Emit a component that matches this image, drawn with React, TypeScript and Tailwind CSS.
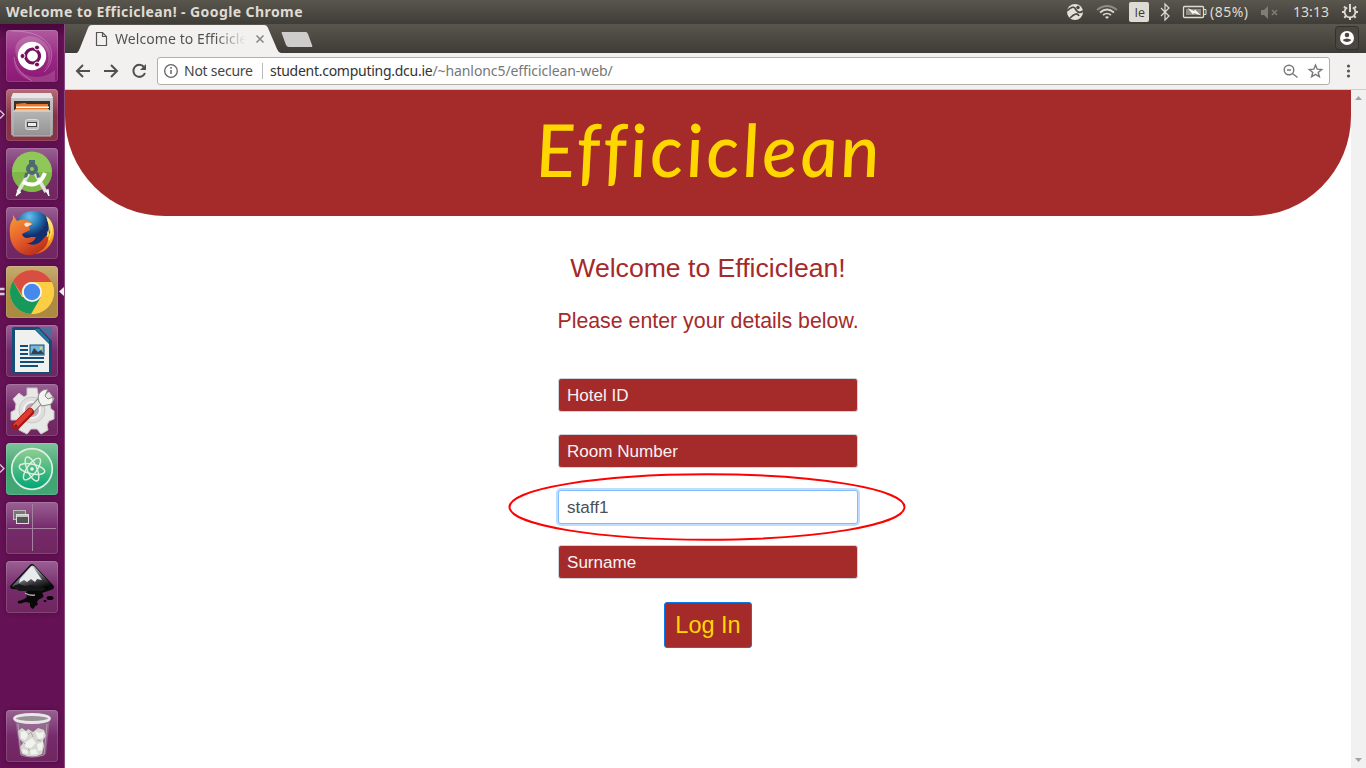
import React from "react";

type Kids = { children: React.ReactNode };

function Tile({ className, children }: Kids & { className: string }) {
  return (
    <div className={`relative h-[52px] w-[52px] shrink-0 rounded-[4px] shadow-[inset_0_0_0_1px_rgba(255,255,255,0.14),0_0_4px_rgba(20,0,20,0.35)] ${className}`}>
      <svg width="52" height="52" viewBox="0 0 52 52" className="block">
        {children}
      </svg>
    </div>
  );
}

const purple = "bg-linear-to-b from-[#9a6093] via-[#762b6c] to-[#70265f]";

function Launcher() {
  return (
    <div className="relative flex w-[65px] shrink-0 flex-col items-start gap-[7px] border-r border-[#8b4c80] bg-[#63104f] bg-linear-to-b from-[#4b063e] via-[#651155] via-[2%] to-[#651155] pt-[6px] pb-[6px] pl-[6px]">
      <Tile className="bg-linear-to-b from-[#b05a9f] via-[#992985] to-[#8c1874]">
        <path d="M13 31C1 12 21 1 34 9c14 8 13 23 4 31C49 26 38 11 26 12 16 13 11 21 13 31Z" fill="#fff" opacity=".18" />
        <path d="M8 28C7 43 19 50 28 51h21V40C34 53 10 47 8 28Z" fill="#fff" opacity=".15" />
        <path d="M6 1c13 0 29 2 37 14 6 10 1 22-5 27M8 27c1 10 8 18 18 24" fill="none" stroke="#e5b5dd" strokeWidth="1" opacity=".4" />
        <circle cx="26" cy="26" r="14.2" fill="#fff" />
        <circle cx="26.500" cy="26" r="7" fill="none" stroke="#75105f" strokeWidth="3.200" />
        <g fill="#75105f" stroke="#fff" strokeWidth="1"><circle cx="16.500" cy="26" r="2.500" /><circle cx="31" cy="17.500" r="2.500" /><circle cx="31" cy="34.500" r="2.500" /></g>
      </Tile>
      <Tile className="bg-linear-to-b from-[#b76b78] via-[#873248] to-[#883447]">
        <defs><linearGradient id="cabinet" x2="0" y2="1"><stop stopColor="#ccc" /><stop offset="1" stopColor="#999" /></linearGradient><linearGradient id="drawer" x2="0" y2="1"><stop stopColor="#b5b5b5" /><stop offset="1" stopColor="#939393" /></linearGradient></defs>
        <path d="M7 4h38l2 6v36H5V10Z" fill="url(#cabinet)" /><path d="M7 4h38l2 5H5Z" fill="#e6e6e6" />
        <path d="M8 12h36v10H8Z" fill="#3b302c" />
        <path d="M10 15l9-1 2 1h21v7H10Z" fill="#e7782e" /><path d="M10 17.500h33v1.500H10Z" fill="#fff" /><path d="M9 20h34v2H9Z" fill="#ffb650" />
        <path d="M7 22h38v25H7Z" fill="url(#drawer)" stroke="#bbb" /><path d="M7 22h38" stroke="#ddd" />
        <rect x="19.500" y="30.500" width="13" height="10" rx="2" fill="#bbb" stroke="#ddd" /><rect x="21.500" y="33.500" width="9" height="4" fill="#eee" stroke="#444" />
      </Tile>
      <Tile className={purple}>
        <circle cx="26" cy="23.500" r="20" fill="#8fc858" /><path d="M6 24a20 20 0 0 0 40 0Z" fill="#80b848" />
        <path d="M23 25 12 44M29 25l11 19" stroke="#dce4dc" strokeWidth="3.600" />
        <path d="M17 34q15 8 22-9" fill="none" stroke="#fff" strokeWidth="4" /><path d="m12 42-2 6 5-4M40 43l3 5-1-7" stroke="#f8fff5" fill="#fff" />
        <circle cx="26" cy="21" r="4" fill="none" stroke="#4f6971" strokeWidth="4" /><path d="M23 12h6v5h-6zM19 25l-1 5 3-1 2-5M30 25l1 5 3-1-2-5" fill="#4f6971" />
      </Tile>
      <Tile className={purple}>
        <defs>
          <radialGradient id="globe" cx=".4" cy=".15"><stop stopColor="#68c2ed" /><stop offset=".6" stopColor="#2371ae" /><stop offset="1" stopColor="#152f6e" /></radialGradient>
          <linearGradient id="fox" x1=".1" y1="0" x2=".7" y2="1"><stop stopColor="#f39a37" /><stop offset=".5" stopColor="#e7602c" /><stop offset="1" stopColor="#b82c19" /></linearGradient>
          <linearGradient id="tail" x2="0" y2="1"><stop stopColor="#ffef92" /><stop offset=".5" stopColor="#f9b926" /><stop offset="1" stopColor="#e65120" /></linearGradient>
        </defs>
        <circle cx="27" cy="23" r="19" fill="url(#globe)" />
        <path d="M40 9c7 5 8 12 8 18-1 12-11 21-22 20 9-3 17-12 15-23l3 3c0-6-2-11-4-18Z" fill="url(#tail)" />
        <path d="M7 8 11 14q6-3 12 0l4 3-4 2 1 4-8 4q2 6 9 3l5 0q-3 7-10 6 11 5 18-5l4-4q2 12-9 18C20 54 5 43 4 29 3 19 5 15 7 12Z" fill="url(#fox)" />
        <path d="M18 17c3-3 6-1 8 0l-5 3-2-1" fill="#f6e2ce" /><path d="M42 13q3 9-1 17M45 16q2 9-2 17" stroke="#ffef70" fill="none" />
      </Tile>
      <Tile className="bg-linear-to-b from-[#c7ac72] via-[#ad8b45] to-[#ac8941]">
        <circle cx="26" cy="26" r="22" fill="#f6c940" />
        <path d="M6.950 15A22 22 0 0 0 26 48l9-17H26L16 31Z" fill="#16995a" />
        <path d="M6.950 15A22 22 0 0 1 45.050 15L46 16H26a10 10 0 0 0-9.500 14Z" fill="#d84e43" /><path d="M45.600 16H26l9 15-10 17a22 22 0 0 0 20.600-32Z" fill="#fdce43" />
        <circle cx="26" cy="26" r="10" fill="#f5f5f5" /><circle cx="26" cy="26" r="8.200" fill="#4788ed" />
      </Tile>
      <Tile className={purple}>
        <path d="M6 4q0-2 2-2h25l13 14v31q0 2-2 2H8q-2 0-2-2Z" fill="#144d78" /><path d="M9 5h20l14 14v28H9Z" fill="#f0f0ee" />
        <path d="M29 4l14 14V15L33 4Z" fill="#247ba4" /><path d="M34 2h12v12Z" fill="#257da7" opacity=".65" />
        <path d="M14 21h8M14 25h8M14 29h8M14 33h24M14 37h24M14 41h18" stroke="#144d78" strokeWidth="2" />
        <rect x="24" y="20" width="14" height="10" fill="#6fb8df" stroke="#184c6e" /><path d="M25 29l3-6 4 4 3-2 3 4Z" fill="#35424e" /><circle cx="35" cy="23" r="1.500" fill="#e3cf69" />
      </Tile>
      <Tile className={purple}>
        <path d="M21 4h10l1 6 5 2 6-4 5 7-4 5 1 5 3 2v8l-5 2-2 4 1 5-7 4-4-5h-6l-4 5-8-4 1-6-4-4H5v-8l4-2 1-6-3-5 6-6 5 4 3-2Z" fill="#e8e8e6" stroke="#c5c5c4" />
        <circle cx="26" cy="26" r="13" fill="#dededd" stroke="#c8c8c7" /><circle cx="26" cy="26" r="8" fill="#bcaab9" stroke="#f4f4f4" strokeWidth="2" />
        <path d="m18 34 17-18" stroke="#8d8d8b" strokeWidth="7" /><path d="m18 34 17-18" stroke="#e5e5e2" strokeWidth="5" /><path d="M33 18q-3-8 4-12l5-1-3 7 3 3 5-2q1 8-6 8l-5 1Z" fill="#f3f3ef" stroke="#858585" />
        <path d="m10 42 14-14" stroke="#a71610" strokeWidth="8" strokeLinecap="round" /><path d="m10 41 14-14" stroke="#df3931" strokeWidth="5" strokeLinecap="round" /><circle cx="10" cy="42" r="1.500" fill="#6a1f20" />
      </Tile>
      <Tile className="bg-linear-to-b from-[#7dc49a] via-[#3da571] to-[#43a676]">
        <defs><linearGradient id="atomic" x2="0" y2="1"><stop stopColor="#92ce91" /><stop offset="1" stopColor="#00a574" /></linearGradient></defs>
        <circle cx="26" cy="26" r="20.300" fill="url(#atomic)" stroke="#def0e3" strokeWidth="1.700" />
        <g fill="none" stroke="#e0f1e4" strokeWidth="1.400"><ellipse cx="26" cy="26" rx="13" ry="4.800" transform="rotate(12 26 26)" /><ellipse cx="26" cy="26" rx="13" ry="4.800" transform="rotate(66 26 26)" /><ellipse cx="26" cy="26" rx="13" ry="4.800" transform="rotate(126 26 26)" /></g><circle cx="26" cy="26" r="1.800" fill="#e8f8e8" />
      </Tile>
      <Tile className={purple}>
        <path d="M26.500 2v47M2 26.500h48" stroke="#a781a1" /><rect x="7.500" y="8.500" width="12" height="9" fill="#777" stroke="#bbb" /><rect x="10.500" y="12.500" width="12" height="9" fill="#555" stroke="#ddd" /><path d="M11 14h11" stroke="#eee" strokeWidth="1.500" />
      </Tile>
      <Tile className={purple}>
        <defs><linearGradient id="ink" x1=".2" y1="0" x2=".7" y2="1"><stop stopColor="#f3f3f3" /><stop offset=".35" stopColor="#9198a0" /><stop offset=".7" stopColor="#39393e" /><stop offset="1" /></linearGradient></defs>
        <path d="M23 5q3-4 6 0l18 19q3 3-2 5l-9 3q3 3 0 5-4 1-5 4l1 2q-1 2-3 2-2 6-5 0v-3l-4-1-4 1-1-3q5-1 6-4-3-3 1-6L6 28q-4-2 0-5Z" fill="#09090a" />
        <path d="M25 5q1-1 3 0l18 19-6 4-14 1-15-1-5-3Z" fill="url(#ink)" /><path d="M25 6 14 18l-1 4 5-3 3 2 4-3 4 3 2-3 5 1-9-13Z" fill="#e9eaec" />
        <path d="m7 25 6-2 6 2 6-1 7 2 8 1-4 3H13Z" fill="#171719" /><path d="M19 32q4 3 10 2" stroke="#aaa" strokeWidth="1.500" fill="none" /><ellipse cx="14" cy="41" rx="2.300" ry="1.500" /><ellipse cx="44" cy="37" rx="3.500" ry="2" /><ellipse cx="39" cy="40" rx="1.500" ry="1" />
      </Tile>
      <div className="grow" />
      <Tile className={purple}>
        <path d="M9 8h35l-4 36q-12 5-26 0Z" fill="#a589a0" opacity=".55" />
        <path d="m12 21 4-3 4 3 2-2 5 3 5-4 6 2 2 6-3 4 1 6-2 8q-10 5-20 0l-2-7 3-4-4-5Z" fill="#d6d6d2" />
        <path d="m15 22 4-1 3 4-3 5-4-2ZM29 21l4 2 5-1-1 6-5 1ZM20 32l6-4 4 5-5 5-6-1ZM31 34l6-2-1 8-4 1ZM16 39l5 1 1 4-5-1ZM24 40l6-1 2 5-7 1Z" fill="#f2f2ef" />
        <path d="m22 25 3-3 2 5M16 31l3 3M31 30l4 1M22 39l2 2" stroke="#aaa9a7" fill="none" />
        <ellipse cx="26" cy="8.500" rx="17.500" ry="4" fill="#9b9097" stroke="#e9e8e8" strokeWidth="2.800" /><path d="m12 14 3 31q11 4 23 0l3-31" fill="none" stroke="#c0b4bd" opacity=".7" />
      </Tile>
      <svg className="absolute left-0 top-0" width="64" height="744" fill="none" stroke="#d8cbd4" strokeWidth="1.300">
        <path d="M0 86.500 4 90.500 0 94.500M0 440.500l4 4-4 4" /><path d="M0 265h4.500M0 270h4.500" strokeWidth="2.500" /><path d="m64 263-5 4.500 5 4.500Z" fill="#eee" stroke="none" />
      </svg>
    </div>
  );
}

function SystemBar() {
  return (
    <div className="flex h-6 shrink-0 items-center bg-linear-to-b from-[#59564d] to-[#3f3d38] pl-[6px] font-['Noto_Sans',sans-serif] text-[#dfdbd2]">
      <span className="text-[14px] font-bold leading-6 tracking-[0.42px] whitespace-nowrap">Welcome to Efficiclean! - Google Chrome</span>
      <div className="grow" />
      <svg width="300" height="24" viewBox="0 0 300 24" className="shrink-0">
        <circle cx="9" cy="12" r="8" fill="#e5dfd6" /><path d="M1 11q7-7 9-1 3 4 7 1M4 18q7-7 9-2" fill="none" stroke="#48463f" strokeWidth="1.700" /><circle cx="12" cy="7.500" r="1.700" fill="#48463f" />
        <g fill="none" stroke="#ddd8ce" strokeWidth="1.700"><path d="M31 10q10-8 20 0" opacity=".45" /><path d="M34 12.500q7-6 14 0M37 15q4-3 8 0" /></g><path d="m39 17 2 2 2-2q-2-1.500-4 0" fill="#ddd8ce" />
        <rect x="63" y="2" width="20" height="20" rx="2" fill="#dfdbd2" /><text x="68.500" y="17" fontFamily="Open Sans, sans-serif" fontSize="12.500" fontWeight="500" fill="#3c3b37">Ie</text>
        <path d="m95 8 8 8-4 4V4l4 4-8 8" fill="none" stroke="#dfdbd2" strokeWidth="1.200" />
        <rect x="117.500" y="6.500" width="20" height="11" rx="1" fill="none" stroke="#dfdbd2" strokeWidth="1.300" /><path d="M138 9.500h2v5h-2" fill="none" stroke="#dfdbd2" /><path d="M120 9h15v6h-15Z" fill="#8f8c84" /><path d="m121.500 8 6.500 3 1-1.500 6 6-7-2.500-1 1.500Z" fill="#f8f4eb" />
        <text x="144" y="17" fontSize="14" textLength="38" fill="#dfdbd2">(85%)</text>
        <path d="M195 10h3l4-4v13l-4-4h-3Z" fill="#817d73" /><path d="m206 10 5 5m0-5-5 5" stroke="#817d73" strokeWidth="1.500" />
        <text x="227" y="17" fontSize="14" textLength="36" fill="#dfdbd2">13:13</text>
        <g transform="translate(284 12)" fill="none" stroke="#dfdbd2"><path d="M-2.800-4.600a5.400 5.400 0 1 0 5.600 0" strokeWidth="1.800" /><path d="M0-8V0" strokeWidth="2" /><path d="m-4.500-4-1.500-1.500M4.500-4 6-5.500M-6 0h-2M6 0h2M-4 4-5.700 5.700M4 4l1.700 1.700M0 6v2" strokeWidth="2" /></g>
      </svg>
    </div>
  );
}

function BrowserChrome() {
  return (
    <>
      <div className="relative h-[29px] shrink-0 bg-linear-to-b from-[#59564d] to-[#3e3c37]">
        <svg width="260" height="29" viewBox="0 0 260 29" className="absolute left-0 top-0">
          <path d="M12 29q2-2 3-5L23 4q1-3 4-3h172q3 0 4 3l9 21q1 3 4 4Z" fill="#f2f1f0" />
          <path d="M31.500 8.500h6l4 4v9h-10Zm6 0v4h4" fill="none" stroke="#555" strokeWidth="1.200" /><path d="m191.500 11.500 7 7m0-7-7 7" stroke="#888" strokeWidth="1.600" />
          <path d="M217 8h24q1 0 2 2l4 11q1 2-1 2h-22q-2 0-3-2l-4-11q-1-2 0-2Z" fill="#cfcdcc" />
        </svg>
        <div className="absolute left-[50px] top-0 w-[131px] overflow-hidden whitespace-nowrap bg-linear-to-r from-[#50504f] from-[77%] to-transparent bg-clip-text font-['Noto_Sans',sans-serif] text-[14px] leading-[29px] tracking-[0.08px] text-transparent">Welcome to Efficiclean!</div>
        <svg width="24" height="24" viewBox="0 0 24 24" className="absolute right-[7px] top-[2px]"><rect x=".5" y=".5" width="23" height="23" rx="3" fill="#49473f" stroke="#33312d" /><circle cx="12" cy="12" r="7" fill="#fff" /><circle cx="12" cy="9" r="2.300" fill="#49473f" /><path d="M7.500 14q4.500-3 9 0-4.500 4-9 0Z" fill="#49473f" /></svg>
      </div>
      <div className="flex h-[37px] shrink-0 items-center border-b border-[#cfcdcb] bg-[#f2f1f0]">
        <svg width="92" height="36" viewBox="0 0 92 36" className="shrink-0" fill="none" stroke="#51504f" strokeWidth="2"><path d="M25 18H12m6-6-6 6 6 6M39 18h13m-6-6 6 6-6 6M79 14a6 6 0 1 0 1 6" /><path d="M81 11v6h-6Z" fill="#51504f" stroke="none" /></svg>
        <div className="flex h-[28px] grow items-center rounded-[3px] border border-[#b1afad] bg-white font-['Noto_Sans',sans-serif] text-[14px] leading-7">
          <svg width="26" height="26" viewBox="0 0 26 26" className="shrink-0"><circle cx="13" cy="13" r="6.300" fill="none" stroke="#666" strokeWidth="1.300" /><path d="M13 12v4m0-7v1.700" stroke="#666" strokeWidth="1.500" /></svg>
          <span className="w-[69px] whitespace-nowrap tracking-[-0.25px] text-[#454545]">Not secure</span>
          <span className="ml-[9px] h-4 w-px bg-[#bbb]" />
          <span className="ml-[7px] whitespace-nowrap tracking-[-0.27px] text-[#333]">student.computing.dcu.ie<span className="tracking-[-0.08px] text-[#777]">/~hanlonc5/efficiclean-web/</span></span>
          <div className="grow" />
          <svg width="49" height="26" viewBox="0 0 49 26" className="shrink-0" fill="none" stroke="#777" strokeWidth="1.400"><circle cx="9" cy="12" r="4.800" /><path d="m12.500 15.500 5 4M7 12h4" /><path d="m35 7 1.700 4.200 4.500.3-3.500 2.900 1.200 4.400-3.900-2.400-3.900 2.400 1.200-4.400-3.500-2.900 4.500-.3Z" transform="translate(.5 0)" /></svg>
        </div>
        <svg width="36" height="36" viewBox="0 0 36 36" className="shrink-0" fill="#555"><circle cx="18.500" cy="13" r="1.600" /><circle cx="18.500" cy="18" r="1.600" /><circle cx="18.500" cy="23" r="1.600" /></svg>
      </div>
    </>
  );
}

const fieldClass = "block h-[34px] w-[300px] rounded-[3px] border px-2 pt-[2px] text-[17.070px] outline-none";
const redField = `${fieldClass} border-[#ced4da] bg-[#a52a2a] text-white placeholder:text-[#f8f2f2] placeholder:opacity-100`;

function LoginPage() {
  return (
    <div className="flex min-w-0 grow flex-col items-center font-['Liberation_Sans',Arial,sans-serif] text-[#a52a2a]">
      <header className="flex h-[126px] w-full justify-center rounded-b-[100px] bg-[#a52a2a]">
        <h1 className="mt-[2px] skew-x-[4deg] whitespace-nowrap pl-[3px] font-[Lato,sans-serif] text-[73px] font-medium italic leading-[114px] tracking-[3px] text-[#ffd700]">Efficiclean</h1>
      </header>
      <h2 className="mt-[33px] whitespace-nowrap text-[26.600px] leading-[38px]">Welcome to Efficiclean!</h2>
      <p className="mt-[18px] whitespace-nowrap text-[21.330px] leading-8">Please enter your details below.</p>
      <form className="relative mt-[41.400px] flex flex-col items-center gap-[21.700px]">
        <input className={redField} placeholder="Hotel ID" />
        <input className={redField} placeholder="Room Number" />
        <div className="relative">
          <input className={`${fieldClass} border-[#80bdff] bg-white text-[#495057] shadow-[0_0_0_2px_#bfdeff]`} defaultValue="staff1" />
          <svg width="398" height="68" viewBox="0 0 398 68" className="pointer-events-none absolute left-[-50px] top-[-17px]"><ellipse cx="199" cy="34" rx="197.500" ry="32.700" fill="none" stroke="#f00" strokeWidth="2" /></svg>
        </div>
        <input className={redField} placeholder="Surname" />
        <button type="button" className="mt-[1px] h-[46px] w-[88px] whitespace-nowrap rounded-[3px] border border-[#087bea] bg-[#a52a2a] text-[23.500px] leading-8 text-[#ffd700]">Log In</button>
      </form>
    </div>
  );
}

export default function App() {
  return (
    <div className="flex h-[768px] w-[1366px] flex-col overflow-hidden bg-white">
      <SystemBar />
      <div className="flex min-h-0 grow">
        <Launcher />
        <div className="flex min-w-0 grow flex-col">
          <BrowserChrome />
          <div className="flex min-h-0 grow bg-white">
            <LoginPage />
            <div className="flex w-[15px] shrink-0 flex-col items-center justify-between bg-[#f1f1f1] py-[6px]">
              <svg width="7" height="4"><path d="M0 4 3.500 0 7 4" fill="#a3a3a3" /></svg>
              <svg width="7" height="4"><path d="M0 0 3.500 4 7 0" fill="#a3a3a3" /></svg>
            </div>
          </div>
        </div>
      </div>
    </div>
  );
}
